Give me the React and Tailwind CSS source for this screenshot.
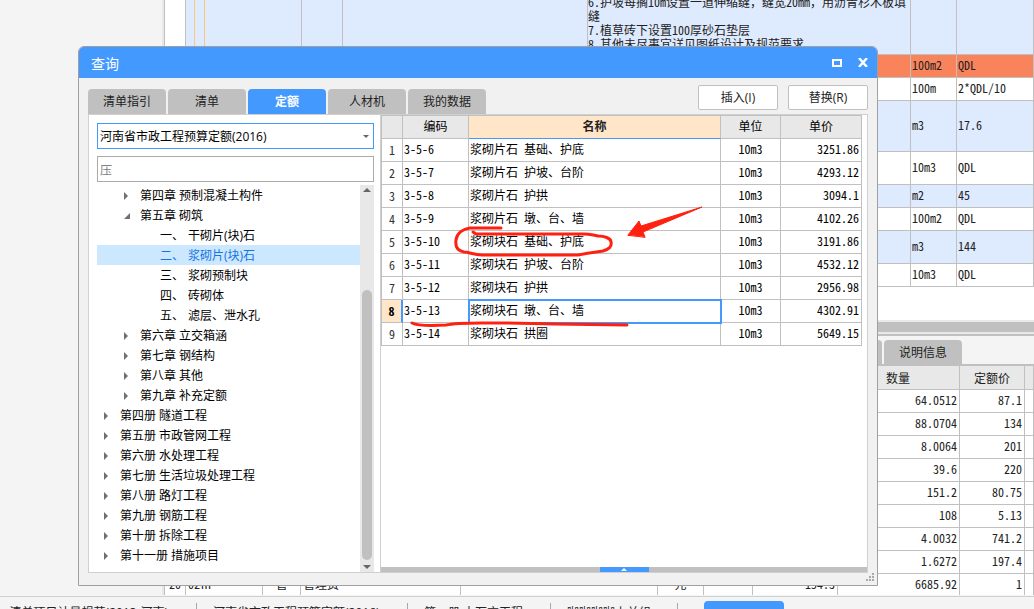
import React, { useState } from 'react';

const TABS = ['清单指引', '清单', '定额', '人材机', '我的数据'];

const TREE = [
  { level: 1, text: '第四章 预制混凝土构件' },
  { level: 1, text: '第五章 砌筑', open: true },
  { level: 2, no: '一、', text: '干砌片(块)石' },
  { level: 2, no: '二、', text: '浆砌片(块)石' },
  { level: 2, no: '三、', text: '浆砌预制块' },
  { level: 2, no: '四、', text: '砖砌体' },
  { level: 2, no: '五、', text: '滤层、泄水孔' },
  { level: 1, text: '第六章 立交箱涵' },
  { level: 1, text: '第七章 钢结构' },
  { level: 1, text: '第八章 其他' },
  { level: 1, text: '第九章 补充定额' },
  { level: 0, text: '第四册 隧道工程' },
  { level: 0, text: '第五册 市政管网工程' },
  { level: 0, text: '第六册 水处理工程' },
  { level: 0, text: '第七册 生活垃圾处理工程' },
  { level: 0, text: '第八册 路灯工程' },
  { level: 0, text: '第九册 钢筋工程' },
  { level: 0, text: '第十册 拆除工程' },
  { level: 0, text: '第十一册 措施项目' },
];

const QUOTAS = [
  ['3-5-6', '浆砌片石 基础、护底', '3251.86'],
  ['3-5-7', '浆砌片石 护坡、台阶', '4293.12'],
  ['3-5-8', '浆砌片石 护拱', '3094.1'],
  ['3-5-9', '浆砌片石 墩、台、墙', '4102.26'],
  ['3-5-10', '浆砌块石 基础、护底', '3191.86'],
  ['3-5-11', '浆砌块石 护坡、台阶', '4532.12'],
  ['3-5-12', '浆砌块石 护拱', '2956.98'],
  ['3-5-13', '浆砌块石 墩、台、墙', '4302.91'],
  ['3-5-14', '浆砌块石 拱圈', '5649.15'],
];

const BILL_ROWS = [
  { unit: '100m2', expr: 'QDL', style: 'h-[23px] bg-[#f9845c]' },
  { unit: '100m', expr: '2*QDL/10', style: 'h-[23px] bg-white' },
  { unit: 'm3', expr: '17.6', style: 'h-[51px] bg-[#deeafe]' },
  { unit: '10m3', expr: 'QDL', style: 'h-[33px] bg-white' },
  { unit: 'm2', expr: '45', style: 'h-[23px] bg-[#deeafe]' },
  { unit: '100m2', expr: 'QDL', style: 'h-[23px] bg-white' },
  { unit: 'm3', expr: '144', style: 'h-[33px] bg-[#deeafe]' },
  { unit: '10m3', expr: 'QDL', style: 'h-[23px] bg-white' },
];

const DETAIL_ROWS = [
  ['64.0512', '87.1'],
  ['88.0704', '134'],
  ['8.0064', '201'],
  ['39.6', '220'],
  ['151.2', '80.75'],
  ['108', '5.13'],
  ['4.0032', '741.2'],
  ['1.6272', '197.4'],
];

const GRID_FONT = "font-['Noto_Sans_Mono_CJK_SC','Liberation_Mono','Noto_Sans_CJK_SC',monospace]";
const CELL = 'border-r border-b border-[#c0c0c0] px-0 pt-0 pb-0.5';

const BillTable = () => (
  <table className={`w-full table-fixed border-separate border-spacing-0 text-xs leading-[14px] text-[#222] ${GRID_FONT}`}>
    <colgroup>
      <col className="w-[21px]" />
      <col className="w-[116px]" />
      <col className="w-[41px]" />
      <col className="w-[245px]" />
      <col className="w-[323px]" />
      <col className="w-[46px]" />
      <col />
    </colgroup>
    <tbody>
      <tr className="h-[55px] bg-[#deeafe]">
        <td className="border-r border-b border-[#c0c0c0] bg-white p-0" />
        <td className="border-r border-b border-[#c0c0c0] p-0">
          <div className="ml-2 h-[54px] w-[11px] border-x border-[#ffc67a]" />
        </td>
        <td className={CELL} />
        <td className={CELL} />
        <td className="border-r border-b border-[#c0c0c0] p-0">
          <div className="flex h-[54px] flex-col justify-end overflow-hidden pb-[3px]">
            <p>6.护坡每搁10m设置一道伸缩缝，缝宽20mm，用沥青杉木板填缝</p>
            <p>7.植草砖下设置100厚砂石垫层</p>
            <p>8.其他未尽事宜详见图纸设计及规范要求</p>
          </div>
        </td>
        <td className={CELL} />
        <td className={CELL} />
      </tr>
      {BILL_ROWS.map((row, i) => (
        <tr key={i} className={row.style}>
          <td className={CELL} />
          <td className={CELL} />
          <td className={CELL} />
          <td className={CELL} />
          <td className={CELL} />
          <td className={`${CELL} indent-px`}>{row.unit}</td>
          <td className={`${CELL} indent-px`}>{row.expr}</td>
        </tr>
      ))}
    </tbody>
  </table>
);

const DetailTable = () => (
  <table className={`w-full table-fixed border-separate border-spacing-0 text-xs leading-[14px] text-[#222] ${GRID_FONT}`}>
    <colgroup>
      <col className="w-[21px]" />
      <col className="w-[77px]" />
      <col className="w-[38px]" />
      <col className="w-[160px]" />
      <col className="w-[197px]" />
      <col className="w-[46px]" />
      <col className="w-[49px]" />
      <col className="w-[85px]" />
      <col className="w-[122px]" />
      <col className="w-[65px]" />
      <col />
    </colgroup>
    <thead>
      <tr className="h-6 bg-[#e8e8e8]">
        {['', '', '', '', '', '', '', ''].map((_, i) => (
          <th key={i} className={CELL} />
        ))}
        <th className="border-r border-b border-[#c0c0c0] py-0 pl-12 text-left font-normal">数量</th>
        <th className="border-r border-b border-[#c0c0c0] p-0 font-normal">定额价</th>
        <th className={CELL} />
      </tr>
    </thead>
    <tbody>
      {DETAIL_ROWS.map(([amount, price]) => (
        <tr key={amount} className="h-[23px]">
          {['', '', '', '', '', '', '', ''].map((_, i) => (
            <td key={i} className={CELL} />
          ))}
          <td className={`${CELL} text-right`}><span className="pr-0.5">{amount}</span></td>
          <td className={`${CELL} text-right`}><span className="pr-0.5">{price}</span></td>
          <td className={CELL} />
        </tr>
      ))}
      <tr className="h-[23px]">
        <td className={`${CELL} text-center`}>20</td>
        <td className={`${CELL} indent-0.5`}>02Ⅲ</td>
        <td className={`${CELL} text-center`}>管</td>
        <td className={`${CELL} indent-0.5`}>管理费</td>
        <td className={CELL} />
        <td className={`${CELL} text-center`}>元</td>
        <td className={CELL} />
        <td className={`${CELL} text-right`}><span className="pr-0.5">154.3</span></td>
        <td className={`${CELL} text-right`}><span className="pr-0.5">6685.92</span></td>
        <td className={`${CELL} text-right`}><span className="pr-0.5">1</span></td>
        <td className={CELL} />
      </tr>
    </tbody>
  </table>
);

const TreeItem = ({ item, selected, onSelect }) => {
  const indent = ['pl-[7px]', 'pl-[27px]', 'pl-[63px]'][item.level];
  return (
    <li
      onClick={onSelect}
      className={`flex h-5 cursor-default items-center pt-0.5 ${indent} ${selected ? 'bg-[#cce8ff] text-[#1473e6]' : 'text-black'}`}
    >
      {item.level < 2 && (
        <svg width="8" height="8" viewBox="0 0 8 8" className="mr-2 shrink-0" fill="#707070">
          {item.open ? <path d="M6 1v6H0z" /> : <path d="M0 0l4 4-4 4z" />}
        </svg>
      )}
      {item.no && <span className="w-7">{item.no}</span>}
      <span>{item.text}</span>
    </li>
  );
};

const QuotaTree = () => {
  const [selected, setSelected] = useState(3);
  return (
    <div className="flex min-h-0 flex-1">
      <ul className="flex-1 overflow-hidden">
        {TREE.map((item, i) => (
          <TreeItem key={item.text} item={item} selected={i === selected} onSelect={() => setSelected(i)} />
        ))}
      </ul>
      <div className="flex w-3.5 flex-col items-center bg-[#e8e8e8] py-[3px]">
        <svg width="8" height="4" viewBox="0 0 8 4" fill="#666"><path d="M0 4l4-4 4 4z" /></svg>
        <div className="mt-[98px] w-2.5 flex-1 rounded-full bg-[#c0c0c0]" />
        <svg width="8" height="4" viewBox="0 0 8 4" className="mt-[5px]" fill="#666"><path d="M0 0l4 4 4-4z" /></svg>
      </div>
    </div>
  );
};

const QuotaTable = () => (
  <table className={`w-[481px] table-fixed border-separate border-spacing-0 border-l border-[#c0c0c0] text-xs leading-[14px] text-black ${GRID_FONT}`}>
    <colgroup>
      <col className="w-[21px]" />
      <col className="w-[66px]" />
      <col className="w-[252px]" />
      <col className="w-[60px]" />
      <col className="w-[81px]" />
    </colgroup>
    <thead>
      <tr className="h-6 bg-[#e8e8e8]">
        <th className={`${CELL} border-t`} />
        <th className={`${CELL} border-t font-normal`}>编码</th>
        <th className="border-t border-r border-b border-t-[#c0c0c0] border-r-[#c0c0c0] border-b-[#4499ff] bg-[#ffe6c8] px-0 pt-0 pb-0.5 font-bold text-[#222]">名称</th>
        <th className={`${CELL} border-t font-normal`}>单位</th>
        <th className={`${CELL} border-t font-normal`}>单价</th>
      </tr>
    </thead>
    <tbody>
      {QUOTAS.map(([code, name, price], i) => {
        const active = i === 7;
        return (
          <tr key={code} className="h-[23px]">
            <td className={active ? 'border-r-2 border-b border-r-[#4499ff] border-b-[#c0c0c0] bg-[#ffe6c8] p-0 text-center font-bold' : 'border-r border-b border-[#c0c0c0] p-0 text-center text-[#333]'}>
              {i + 1}
            </td>
            <td className={`${CELL} indent-px`}>{code}</td>
            <td className={`${CELL} indent-px ${active ? 'outline-2 -outline-offset-1 outline-[#4499ff]' : ''}`}>{name}</td>
            <td className={`${CELL} text-center`}>10m3</td>
            <td className={`${CELL} text-right`}><span className="pr-0.5">{price}</span></td>
          </tr>
        );
      })}
    </tbody>
  </table>
);

const QueryDialog = () => {
  const [tab, setTab] = useState('定额');
  const [keyword, setKeyword] = useState('压');
  return (
    <div role="dialog" aria-label="查询" className="absolute top-[46px] left-[78px] flex h-[540px] w-[800px] flex-col overflow-hidden rounded-t-md border border-[#a0a0a0] bg-[#f1f1f1]">
      <header className="flex h-[31px] shrink-0 items-center bg-[#4499ff] pr-[9px] pl-3 text-white">
        <h1 className="flex-1 pt-0.5 text-sm">查询</h1>
        <button aria-label="最大化" className="mr-4">
          <svg width="10" height="8" viewBox="0 0 10 8" fill="none" stroke="#fff" strokeWidth="2"><path d="M1 1h8v6H1z" /></svg>
        </button>
        <button aria-label="关闭">
          <svg width="10" height="9" viewBox="0 0 10 9" fill="none" stroke="#fff" strokeWidth="2.4"><path d="M1 0l8 9M9 0L1 9" /></svg>
        </button>
      </header>

      <div className="flex h-9 shrink-0 items-end justify-between px-[9px]">
        <div className="flex gap-0.5">
          {TABS.map((name) => (
            <button
              key={name}
              onClick={() => setTab(name)}
              className={`h-[25px] w-[78px] rounded-t-sm ${name === tab ? 'bg-[#4499ff] font-bold text-white' : 'bg-[#c0c0c0] text-[#222]'}`}
            >
              {name}
            </button>
          ))}
        </div>
        <div className="flex gap-2.5 pb-1">
          <button className="h-[25px] w-20 rounded-xs border border-[#c0c0c0] bg-white text-[#222]">插入(I)</button>
          <button className="h-[25px] w-20 rounded-xs border border-[#c0c0c0] bg-white text-[#222]">替换(R)</button>
        </div>
      </div>

      <div className="mx-[9px] mb-3 flex min-h-0 flex-1 border border-[#d0d0d0] bg-white">
        <aside className="flex w-[292px] shrink-0 flex-col border-r border-[#d0d0d0] pt-2 pr-1.5 pl-2">
          <div className="relative mb-[7px]">
            <select aria-label="定额库" className="block h-[26px] w-full appearance-none border border-[#4499ff] bg-white pt-0.5 pl-0.5 text-black">
              <option>河南省市政工程预算定额(2016)</option>
            </select>
            <svg width="6" height="3" viewBox="0 0 6 3" className="pointer-events-none absolute top-3 right-[5px]" fill="#666"><path d="M0 0h6L3 3z" /></svg>
          </div>
          <input
            aria-label="搜索"
            value={keyword}
            onChange={(e) => setKeyword(e.target.value)}
            className="mb-[3px] block h-[26px] w-full border border-[#ababab] bg-white pt-0.5 pl-0.5 text-[#808080]"
          />
          <QuotaTree />
        </aside>
        <section className="flex min-w-0 flex-1 flex-col justify-between">
          <QuotaTable />
          <div className="flex h-[5px] justify-center bg-[#c0c0c0]">
            <button aria-label="展开" className="flex h-[5px] w-[49px] items-center justify-center bg-[#4499ff]">
              <svg width="6" height="3" viewBox="0 0 6 3" fill="#fff"><path d="M0 3l3-3 3 3z" /></svg>
            </button>
          </div>
        </section>
      </div>

      <svg width="8" height="8" viewBox="0 0 8 8" className="absolute right-[3px] bottom-1" fill="#a8a8a8">
        <path d="M6 0h2v2H6zM3 3h2v2H3zM6 3h2v2H6zM0 6h2v2H0zM3 6h2v2H3zM6 6h2v2H6z" />
      </svg>
    </div>
  );
};

// hand-drawn red marks over the grid
const Annotations = () => (
  <svg width="320" height="135" viewBox="400 200 320 135" className="pointer-events-none absolute top-[200px] left-[400px]" fill="none" stroke="#ff2010" strokeWidth="3" strokeLinecap="round" strokeLinejoin="round">
    <path d="M501 228L470 228C463 229 457 233 456 240C455 247 458 251 464 252C469 252 474 255 482 255L578 255C588 253 596 252 603 251C609 249 612 247 611 242C611 238 604 236 598 236C592 235 590 234 584 234L476 234L473 232" />
    <path d="M412 323C418 326 428 326 446 325C458 322 475 323 505 323L555 324L627 325" />
    <path d="M628 235L639 221L641 226L702 207L643 232L645 237Z" fill="#ff2010" strokeWidth="1" />
  </svg>
);

const StatusBar = () => (
  <footer className="mt-px flex h-10 shrink-0 border-t border-[#d0d0d0] pt-1.5 text-[#222]">
    <div className="flex w-[197px] shrink-0 justify-end overflow-hidden border-r border-[#a0a8b8] pt-0.5 pr-7 whitespace-nowrap">清单项目计量规范(2013-河南)</div>
    <div className="w-[211px] shrink-0 border-r border-[#a0a8b8] pt-0.5 pl-4">河南省市政工程预算定额(2016)</div>
    <div className="w-[143px] shrink-0 border-r border-[#a0a8b8] pt-0.5 pl-4">第一册 土石方工程</div>
    <div className="w-[127px] shrink-0 border-r border-[#a0a8b8] pt-0.5 pl-4">咖咖咖咖上关组</div>
    <button className="-mt-0.5 ml-[26px] h-6 w-20 rounded-sm bg-[#4499ff] pt-0.5 font-bold text-white">10</button>
  </footer>
);

export default function App() {
  return (
    <main className="relative flex h-screen flex-col overflow-hidden bg-[#f4f4f4] font-['Open_Sans','Noto_Sans_CJK_SC',sans-serif] text-xs">
      <div className="flex h-[595px] shrink-0">
        <div className="w-[165px] shrink-0 border-r border-[#c0c0c0]">
          <div className="ml-auto h-full w-0.5 bg-[#e8e8e8]" />
        </div>
        <div className="flex min-w-0 flex-1 flex-col overflow-hidden bg-white">
          <div className="h-80 shrink-0">
            <BillTable />
          </div>
          <div className="h-3.5 shrink-0 border-y-2 border-[#e8e8e8] bg-[#c0c0c0]" />
          <div className="flex h-8 shrink-0 items-end gap-0.5 border-y-2 border-[#c0c0c0] bg-[#f4f4f4] pl-[639px]">
            <button className="h-6 w-[78px] shrink-0 rounded-t-sm bg-[#c0c0c0]" aria-label="工料机显示" />
            <button className="h-6 w-[78px] shrink-0 rounded-t-sm bg-[#c0c0c0] pt-0.5 text-[#222]">说明信息</button>
          </div>
          <div className="min-h-0 flex-1 overflow-hidden">
            <DetailTable />
          </div>
        </div>
      </div>
      <StatusBar />
      <QueryDialog />
      <Annotations />
    </main>
  );
}
